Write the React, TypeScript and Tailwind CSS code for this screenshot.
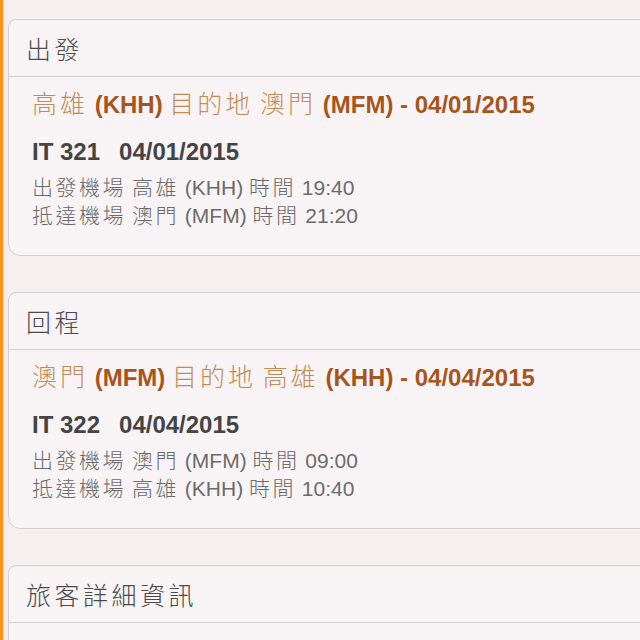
import React from "react";

type Leg = {
  title: string;
  from: string;
  fromCode: string;
  to: string;
  toCode: string;
  date: string;
  flight: string;
  depart: string;
  arrive: string;
};

const LEGS: Leg[] = [
  {
    title: "出發",
    from: "高雄",
    fromCode: "KHH",
    to: "澳門",
    toCode: "MFM",
    date: "04/01/2015",
    flight: "IT 321",
    depart: "19:40",
    arrive: "21:20",
  },
  {
    title: "回程",
    from: "澳門",
    fromCode: "MFM",
    to: "高雄",
    toCode: "KHH",
    date: "04/04/2015",
    flight: "IT 322",
    depart: "09:00",
    arrive: "10:40",
  },
];

const CJK = /([\u3000-\u9fff\uff00-\uffef]+)/;

function Mixed({ text, cjk }: { text: string; cjk: string }) {
  const parts = text.split(CJK);
  return (
    <>
      {parts.map((p, i) =>
        i % 2 === 1 ? (
          <span key={i} className={cjk}>
            {p}
          </span>
        ) : (
          <React.Fragment key={i}>{p}</React.Fragment>
        )
      )}
    </>
  );
}

function Card({ title, children }: { title: string; children?: React.ReactNode }) {
  return (
    <div className="w-[680px] rounded-tl-[8px] rounded-bl-[12px] border border-[#d3cfd0] bg-[#f8f4f5]">
      <div className="h-[57px] flex items-center pl-[17px] pt-[4px] border-b border-[#d6d2d3]">
        <span className="text-[25px] text-[#4a4a4a] leading-none">
          <Mixed text={title} cjk="tracking-[0.14em] font-light" />
        </span>
      </div>
      {children}
    </div>
  );
}

function LegBody({ leg }: { leg: Leg }) {
  const orange = "text-[25px] tracking-[0.12em] font-light";
  const gray = "tracking-[0.12em] font-light";
  return (
    <div className="pl-[23px] pt-[13px] pb-[25px]">
      <div className="h-[28px] leading-[28px] text-[24px] text-[#c38c57] whitespace-pre">
        <Mixed text={leg.from + " "} cjk={orange} />
        <b className="font-bold text-[#a6561d]">({leg.fromCode})</b>
        <Mixed text={" 目的地 " + leg.to + " "} cjk={orange} />
        <b className="font-bold text-[#a6561d]">({leg.toCode}) - {leg.date}</b>
      </div>
      <div className="mt-[20px] h-[28px] flex items-center gap-[19px] text-[24px] font-bold text-[#444] whitespace-pre">
        <span>{leg.flight}</span>
        <span>{leg.date}</span>
      </div>
      <div className="mt-[8px] text-[21px] leading-[28px] text-[#6b6b6b] whitespace-pre">
        <div className="h-[28px]">
          <Mixed text={`出發機場 ${leg.from} (${leg.fromCode}) 時間 ${leg.depart}`} cjk={gray} />
        </div>
        <div className="h-[28px]">
          <Mixed text={`抵達機場 ${leg.to} (${leg.toCode}) 時間 ${leg.arrive}`} cjk={gray} />
        </div>
      </div>
    </div>
  );
}

export default function App() {
  return (
    <div
      className="w-[640px] h-[640px] overflow-hidden flex bg-[#f5eff0]"
      style={{ fontFamily: '"Liberation Sans", "Noto Sans CJK TC", sans-serif' }}
    >
      <div className="w-[3px] shrink-0 bg-[#f7931e]" />
      <div className="flex flex-col gap-[36px] pt-[19px] pl-[5px]">
        {LEGS.map((leg) => (
          <Card key={leg.title} title={leg.title}>
            <LegBody leg={leg} />
          </Card>
        ))}
        <Card title="旅客詳細資訊">
          <div className="h-[40px]" />
        </Card>
      </div>
    </div>
  );
}
